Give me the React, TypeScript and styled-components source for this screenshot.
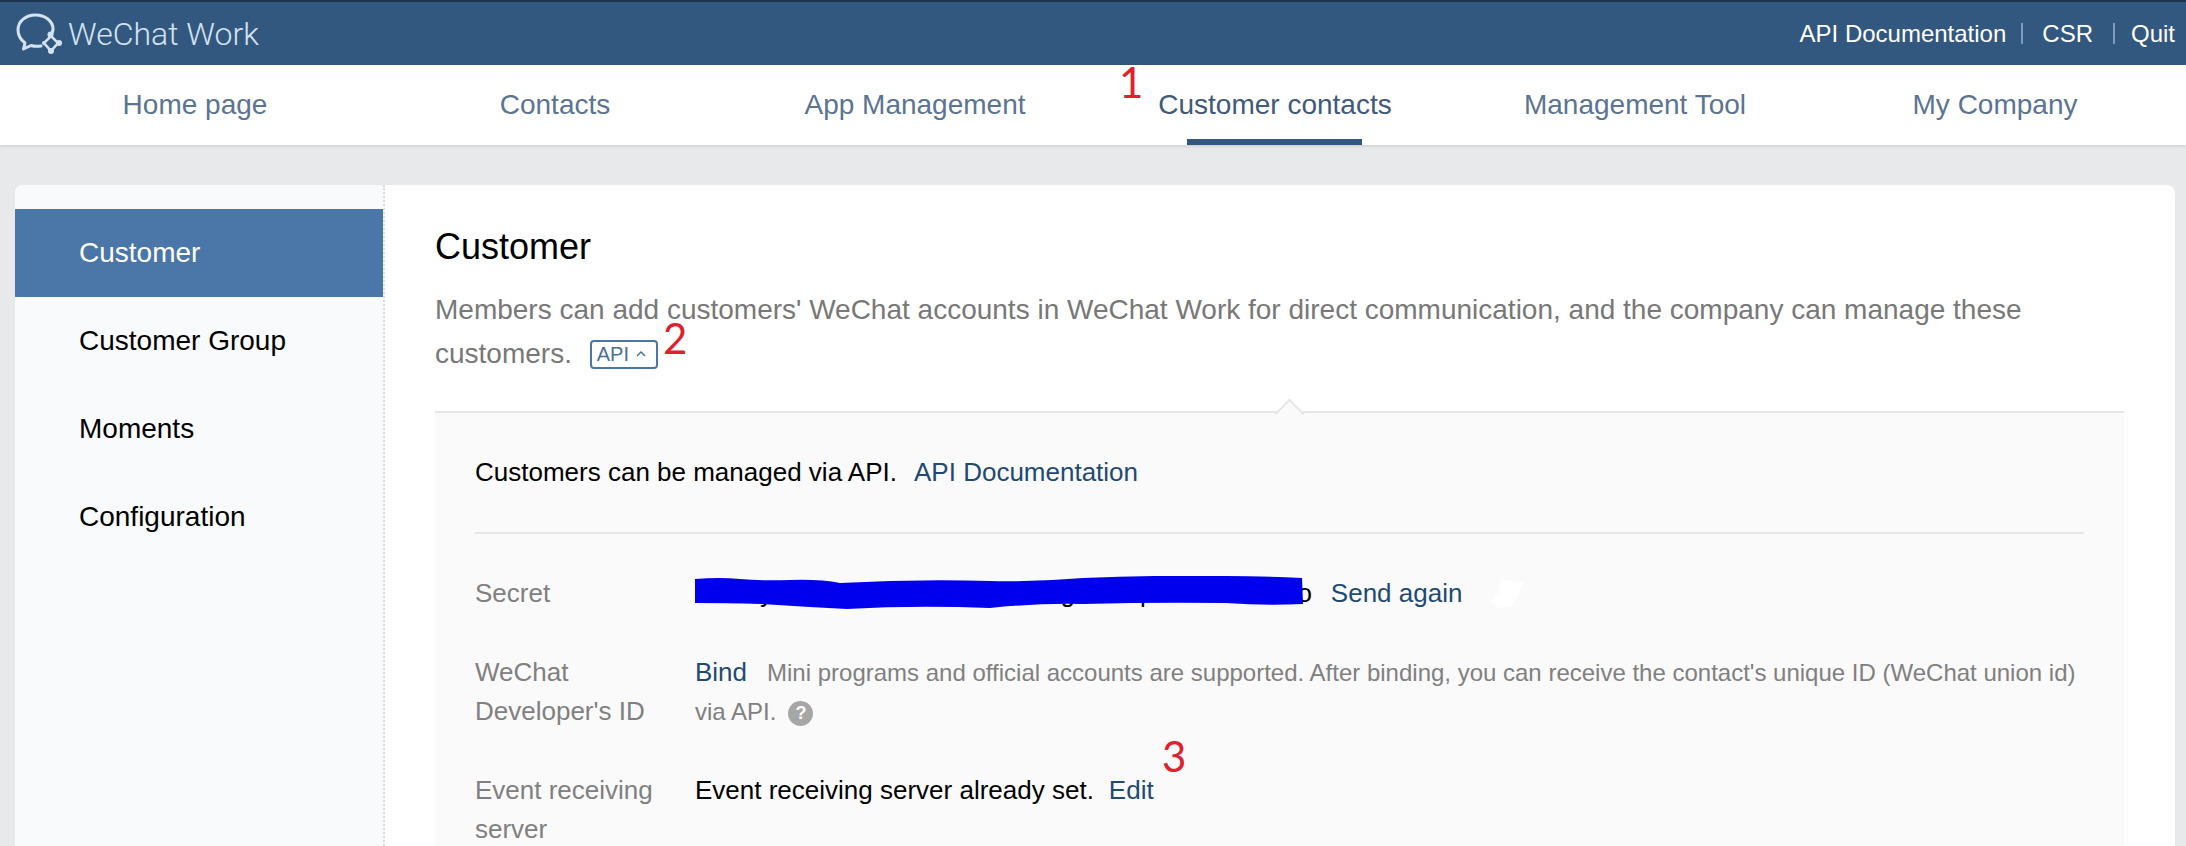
import React from "react"
import styled, { createGlobalStyle } from "styled-components"

const GlobalStyle = createGlobalStyle`
  html, body {
    margin: 0;
    height: 846px;
    overflow: hidden;
    background: #e8e9eb;
    font-family: "Liberation Sans", Arial, sans-serif;
  }
`

const Page = styled.div`
  position: relative;
  width: 2186px;
  height: 846px;
  overflow: hidden;
`

const TopBar = styled.header`
  height: 63px;
  background: #33587f;
  border-top: 2px solid #1c3450;
  display: flex;
  align-items: center;
  justify-content: space-between;
  padding: 0 11px 0 15px;
`

const Logo = styled.div`
  display: flex;
  align-items: center;
  gap: 5px;
  color: #d3e3f3;
  font-family: "Roboto", sans-serif;
  font-size: 32px;
  font-weight: 300;
`

const TopLinks = styled.div`
  display: flex;
  align-items: center;
  color: #fff;
  font-size: 24px;
`

const TopSep = styled.span<{ $left: number; $right: number }>`
  width: 2px;
  height: 21px;
  background: #7f9cc0;
  margin: 0 ${(p) => p.$right}px 0 ${(p) => p.$left}px;
`

const Nav = styled.nav`
  height: 80px;
  background: #fff;
  box-shadow: 0 1px 3px rgba(0, 0, 0, 0.14);
  display: flex;
  padding-left: 15px;
`

const NavItem = styled.a<{ $active?: boolean }>`
  position: relative;
  width: 360px;
  display: flex;
  justify-content: center;
  padding-top: 20px;
  box-sizing: border-box;
  font-size: 28px;
  line-height: 40px;
  color: ${(p) => (p.$active ? "#41597a" : "#5b7492")};

  ${(p) =>
    p.$active &&
    `&::after {
      content: '';
      position: absolute;
      left: 92px;
      bottom: 0;
      width: 175px;
      height: 6px;
      background: #33587f;
    }`}
`

const Card = styled.div`
  margin: 40px 11px 0 15px;
  background: #fff;
  border-radius: 8px 8px 0 0;
  display: flex;
  height: 700px;
  overflow: hidden;
`

const Sidebar = styled.aside`
  width: 368px;
  flex-shrink: 0;
  padding-top: 24px;
  background: #f9fafb;
  border-right: 2px dotted #dcdcdc;
`

const SideItem = styled.div<{ $active?: boolean }>`
  height: 88px;
  display: flex;
  align-items: center;
  padding-left: 64px;
  font-size: 28px;
  color: ${(p) => (p.$active ? "#fff" : "#000")};
  background: ${(p) => (p.$active ? "#4a76a8" : "transparent")};
`

const Main = styled.main`
  flex: 1;
  padding: 37px 51px 0 50px;
`

const Title = styled.h1`
  margin: 0;
  font-size: 36px;
  line-height: 50px;
  font-weight: 400;
  color: #000;
`

const Description = styled.p`
  margin: 16px 0 0;
  font-size: 28px;
  line-height: 44px;
  color: #787878;
`

const ApiTag = styled.span`
  display: inline-flex;
  align-items: center;
  gap: 6px;
  box-sizing: border-box;
  height: 29px;
  width: 68px;
  margin-left: 10px;
  padding-left: 5px;
  border: 2px solid #4a76a8;
  border-radius: 4px;
  color: #4a6f97;
  font-size: 20px;
  vertical-align: 2px;
  line-height: 1;
`

const Panel = styled.section`
  position: relative;
  margin-top: 35px;
  height: 500px;
  padding: 40px 40px 0;
  background: #fafafa;
  border-top: 2px solid #e6e6e6;
  font-size: 26px;
  line-height: 39px;

  &::before {
    content: '';
    position: absolute;
    left: 844px;
    top: -10px;
    width: 19px;
    height: 19px;
    background: #fafafa;
    border-left: 2px solid #e6e6e6;
    border-top: 2px solid #e6e6e6;
    transform: rotate(45deg);
  }
`

const Intro = styled.div`
  color: #000;
  padding-bottom: 40px;
  border-bottom: 2px solid #e6e6e6;
  margin-bottom: 40px;
`

const Link = styled.a<{ $gap?: number }>`
  color: #1f4a73;
  margin-left: ${(p) => p.$gap ?? 0}px;
`

const Row = styled.div`
  display: grid;
  grid-template-columns: 220px 1fr;
  margin-bottom: 40px;
`

const Label = styled.div`
  color: #808080;
`

const Value = styled.div`
  position: relative;
  color: #000;
`

const Hint = styled.span`
  font-size: 24px;
  color: #808080;
  margin-left: 20px;
`

const HintStart = styled.span`
  font-size: 24px;
  color: #808080;
`

const QuestionMark = styled.span`
  display: inline-flex;
  align-items: center;
  justify-content: center;
  width: 25px;
  height: 25px;
  margin-left: 12px;
  border-radius: 50%;
  background: #a6a6a6;
  color: #fff;
  font-size: 18px;
  font-weight: 700;
  vertical-align: 1px;
  line-height: 1;
`

const Scribble = styled.svg`
  position: absolute;
  left: 0;
  top: 2px;
  width: 608px;
  height: 34px;
`

const WhiteBlob = styled.svg`
  position: absolute;
  left: 792px;
  top: 4px;
  width: 38px;
  height: 32px;
`

const Mark = styled.span<{ $x: number; $y: number }>`
  position: absolute;
  left: ${(p) => p.$x}px;
  top: ${(p) => p.$y}px;
  font-family: "Lato", sans-serif;
  font-size: 42px;
  line-height: 42px;
  color: #e0202c;
`

const navItems = ["Home page", "Contacts", "App Management", "Customer contacts", "Management Tool", "My Company"]
const sideItems = ["Customer", "Customer Group", "Moments", "Configuration"]

const LogoIcon = () => (
  <svg width="48" height="44" viewBox="0 0 48 44" fill="none">
    <path
      d="M35 24 C37 22 38 20 38 17 C38 9 30 3 20.500 3 C11 3 3 9 3 18 C3 24 6 28 10 31 L8.500 37 L16 33.500 C19 34.500 23 34.500 26 34"
      stroke="#d3e3f3"
      strokeWidth="3"
      strokeLinecap="round"
      strokeLinejoin="round"
    />
    <path d="M36 24 L43 31 L36 39 L29 31 Z" stroke="#d3e3f3" strokeWidth="2.500" />
    <circle cx="35.500" cy="22.500" r="3" fill="#d3e3f3" />
    <circle cx="44" cy="31" r="3" fill="#d3e3f3" />
    <circle cx="36" cy="39" r="3" fill="#d3e3f3" />
    <circle cx="29" cy="31" r="2" fill="#d3e3f3" />
  </svg>
)

const App = () => {
  return (
    <Page>
      <GlobalStyle />
      <TopBar>
        <Logo>
          <LogoIcon />
          <span>WeChat Work</span>
        </Logo>
        <TopLinks>
          <span>API Documentation</span>
          <TopSep $left={15} $right={19} />
          <span>CSR</span>
          <TopSep $left={20} $right={16} />
          <span>Quit</span>
        </TopLinks>
      </TopBar>

      <Nav>
        {navItems.map((item) => (
          <NavItem key={item} $active={item === "Customer contacts"}>
            {item}
          </NavItem>
        ))}
      </Nav>

      <Card>
        <Sidebar>
          {sideItems.map((item, i) => (
            <SideItem key={item} $active={i === 0}>
              {item}
            </SideItem>
          ))}
        </Sidebar>
        <Main>
          <Title>Customer</Title>
          <Description>
            Members can add customers' WeChat accounts in WeChat Work for direct communication, and the company can
            manage these customers.{" "}
            <ApiTag>
              API
              <svg width="12" height="8" viewBox="0 0 12 8" fill="none">
                <path d="M2 6 L6 2 L10 6" stroke="#4a6f97" strokeWidth="1.500" />
              </svg>
            </ApiTag>
          </Description>
          <Panel>
            <Intro>
              Customers can be managed via API.
              <Link $gap={17}>API Documentation</Link>
            </Intro>
            <Row>
              <Label>Secret</Label>
              <Value>
                xxxxxyxxxxxxxxxxxxxxpxxxxxxxgxxxxxpxxxxxxxxxxxo
                <Link $gap={19}>Send again</Link>
                <Scribble viewBox="0 0 608 34" preserveAspectRatio="none">
                  <path
                    d="M0 3 Q25 1 45 3 T95 4 T145 7 Q220 3 295 5 Q340 6 388 2 Q460 -1 531 0 Q570 0 607 2 L608 28 Q570 30 531 27 Q460 26 388 28 Q340 27 295 32 Q220 29 152 33 Q110 31 66 28 Q30 27 0 27 Z"
                    fill="#0000ee"
                  />
                </Scribble>
                <WhiteBlob viewBox="0 0 38 32">
                  <path d="M14 2 L36 4 L32 16 L24 28 L12 30 L3 24 L10 16 Z" fill="#fff" />
                </WhiteBlob>
              </Value>
            </Row>
            <Row>
              <Label>
                WeChat
                <br />
                Developer's ID
              </Label>
              <Value>
                <Link>Bind</Link>
                <Hint>
                  Mini programs and official accounts are supported. After binding, you can receive the contact's unique
                  ID (WeChat union id)
                </Hint>
                <br />
                <HintStart>via API.</HintStart>
                <QuestionMark>?</QuestionMark>
              </Value>
            </Row>
            <Row>
              <Label>
                Event receiving
                <br />
                server
              </Label>
              <Value>
                Event receiving server already set.
                <Link $gap={15}>Edit</Link>
              </Value>
            </Row>
          </Panel>
        </Main>
      </Card>

      <Mark $x={1119} $y={61}>1</Mark>
      <Mark $x={663} $y={317}>2</Mark>
      <Mark $x={1162} $y={735}>3</Mark>
    </Page>
  )
}

export default App
